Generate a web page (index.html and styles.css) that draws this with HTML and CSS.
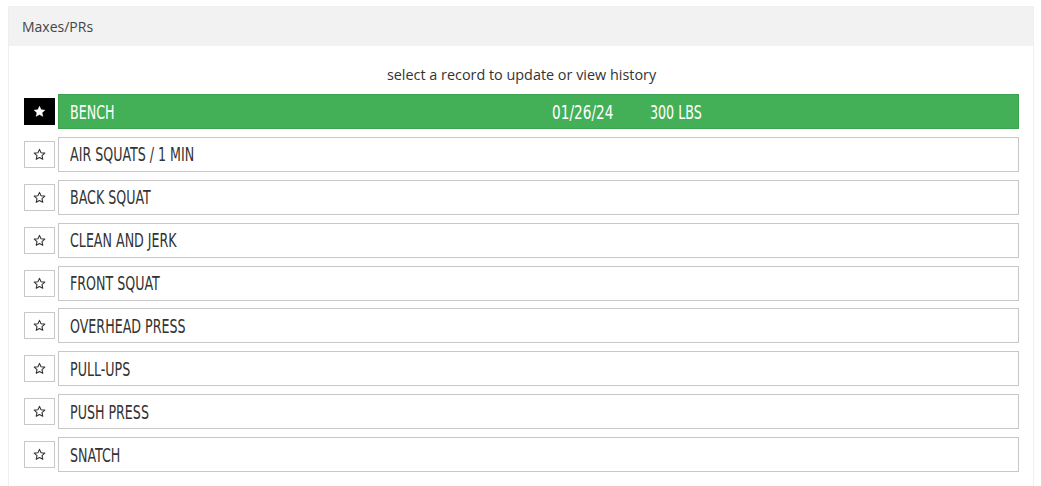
FILE: index.html
```html
<!DOCTYPE html>
<html lang="en">
<head>
    <meta charset="UTF-8">
    <meta name="viewport" content="width=device-width, initial-scale=1.0">
    <title>Maxes/PRs</title>
    <link rel="stylesheet" href="styles.css">
</head>
<body>
    <div class="panel">
        <div class="panel-heading">Maxes/PRs</div>
        <div class="panel-body">
            <p class="hint">select a record to update or view history</p>
            <ul class="records">
                <li class="record favorite">
                    <span class="star"><svg viewBox="0 0 24 24"><path d="M12 2.5l2.9 6.3 6.9.7-5.2 4.6 1.5 6.8L12 17.4l-6.1 3.5 1.5-6.8-5.2-4.6 6.9-.7z"/></svg></span>
                    <div class="record-row">
                        <span class="name">BENCH</span>
                        <span class="date">01/26/24</span>
                        <span class="weight">300 LBS</span>
                    </div>
                </li>
                <li class="record">
                    <span class="star"><svg viewBox="0 0 24 24"><path d="M12 2.5l2.9 6.3 6.9.7-5.2 4.6 1.5 6.8L12 17.4l-6.1 3.5 1.5-6.8-5.2-4.6 6.9-.7z"/></svg></span>
                    <div class="record-row"><span class="name">AIR SQUATS / 1 MIN</span></div>
                </li>
                <li class="record">
                    <span class="star"><svg viewBox="0 0 24 24"><path d="M12 2.5l2.9 6.3 6.9.7-5.2 4.6 1.5 6.8L12 17.4l-6.1 3.5 1.5-6.8-5.2-4.6 6.9-.7z"/></svg></span>
                    <div class="record-row"><span class="name">BACK SQUAT</span></div>
                </li>
                <li class="record">
                    <span class="star"><svg viewBox="0 0 24 24"><path d="M12 2.5l2.9 6.3 6.9.7-5.2 4.6 1.5 6.8L12 17.4l-6.1 3.5 1.5-6.8-5.2-4.6 6.9-.7z"/></svg></span>
                    <div class="record-row"><span class="name">CLEAN AND JERK</span></div>
                </li>
                <li class="record">
                    <span class="star"><svg viewBox="0 0 24 24"><path d="M12 2.5l2.9 6.3 6.9.7-5.2 4.6 1.5 6.8L12 17.4l-6.1 3.5 1.5-6.8-5.2-4.6 6.9-.7z"/></svg></span>
                    <div class="record-row"><span class="name">FRONT SQUAT</span></div>
                </li>
                <li class="record">
                    <span class="star"><svg viewBox="0 0 24 24"><path d="M12 2.5l2.9 6.3 6.9.7-5.2 4.6 1.5 6.8L12 17.4l-6.1 3.5 1.5-6.8-5.2-4.6 6.9-.7z"/></svg></span>
                    <div class="record-row"><span class="name">OVERHEAD PRESS</span></div>
                </li>
                <li class="record">
                    <span class="star"><svg viewBox="0 0 24 24"><path d="M12 2.5l2.9 6.3 6.9.7-5.2 4.6 1.5 6.8L12 17.4l-6.1 3.5 1.5-6.8-5.2-4.6 6.9-.7z"/></svg></span>
                    <div class="record-row"><span class="name">PULL-UPS</span></div>
                </li>
                <li class="record">
                    <span class="star"><svg viewBox="0 0 24 24"><path d="M12 2.5l2.9 6.3 6.9.7-5.2 4.6 1.5 6.8L12 17.4l-6.1 3.5 1.5-6.8-5.2-4.6 6.9-.7z"/></svg></span>
                    <div class="record-row"><span class="name">PUSH PRESS</span></div>
                </li>
                <li class="record">
                    <span class="star"><svg viewBox="0 0 24 24"><path d="M12 2.5l2.9 6.3 6.9.7-5.2 4.6 1.5 6.8L12 17.4l-6.1 3.5 1.5-6.8-5.2-4.6 6.9-.7z"/></svg></span>
                    <div class="record-row"><span class="name">SNATCH</span></div>
                </li>
            </ul>
        </div>
    </div>
</body>
</html>
```

FILE: styles.css
```css
/* General Styles */
body {
    font-family: 'Open Sans', 'Noto Sans', sans-serif;
    margin: 0;
    padding: 0;
    background: #fff;
    color: #333;
}

.panel {
    margin: 6px 7px 0 8px;
    border: 1px solid #efefef;
    border-bottom: none;
    background: #fff;
}

.panel-heading {
    height: 39px;
    line-height: 39px;
    padding: 0 13px;
    background: #f2f2f2;
    font-size: 14px;
    color: #444;
}

.panel-body {
    padding: 20px 14px 20px 15px;
}

.hint {
    margin: 0 0 10px;
    text-align: center;
    font-size: 14.4px;
    line-height: 18px;
    color: #333;
}

.records {
    list-style: none;
    margin: 0;
    padding: 0;
    display: flex;
    flex-direction: column;
    gap: 7.875px;
}

.record {
    display: flex;
    align-items: center;
    gap: 3px;
}

.star {
    width: 29px;
    height: 25px;
    border: 1px solid #c8c8c8;
    display: flex;
    align-items: center;
    justify-content: center;
    flex-shrink: 0;
}

.star svg {
    width: 13px;
    height: 13px;
    fill: none;
    stroke: #333;
    stroke-width: 2;
    stroke-linejoin: round;
}

.record-row {
    flex: 1;
    height: 33px;
    border: 1px solid #c8c8c8;
    display: flex;
    align-items: center;
    padding-left: 11px;
    font-family: 'DejaVu Sans', sans-serif;
    font-stretch: condensed;
    font-size: 19px;
    color: #333;
}

/* narrow the type to the condensed look of the original */
.record-row span {
    display: inline-block;
    transform: scaleX(0.74);
    transform-origin: left center;
    white-space: nowrap;
}

.name {
    width: 482px;
}

.record-row .date {
    width: 98px;
    transform: scaleX(0.8);
}

/* Favorite (highlighted) record */
.favorite .star {
    background: #000;
    border-color: #000;
}

.favorite .star svg {
    fill: #fff;
    stroke: #fff;
    stroke-width: 1;
}

.favorite .record-row {
    background: #43b057;
    border-color: #3ba34e;
    color: #fff;
}
```
